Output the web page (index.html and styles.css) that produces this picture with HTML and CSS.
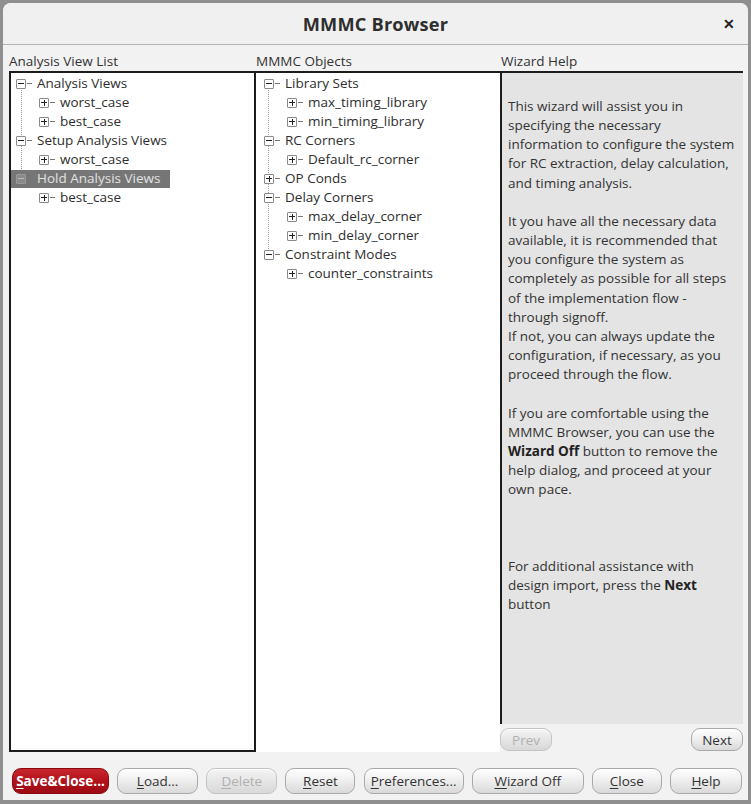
FILE: index.html
```html
<!DOCTYPE html>
<html>
<head>
<meta charset="utf-8">
<title>MMMC Browser</title>
<link rel="stylesheet" href="styles.css">
</head>
<body>
<div class="window">
  <div class="titlebar">
    <span></span>
    <span class="title">MMMC Browser</span>
    <span class="close">✕</span>
  </div>
  <div class="panes">
    <div class="label">Analysis View List</div>
    <div class="label">MMMC Objects</div>
    <div class="label">Wizard Help</div>

    <div class="pane left">
      <div class="tree tree-left">
        <div class="row l0"><span class="ex minus"></span><span class="dash"></span><span class="txt">Analysis Views</span></div>
        <div class="row l1"><span class="ex plus"></span><span class="dash"></span><span class="txt">worst_case</span></div>
        <div class="row l1"><span class="ex plus"></span><span class="dash"></span><span class="txt">best_case</span></div>
        <div class="row l0"><span class="ex minus"></span><span class="dash"></span><span class="txt">Setup Analysis Views</span></div>
        <div class="row l1"><span class="ex plus"></span><span class="dash"></span><span class="txt">worst_case</span></div>
        <div class="row l0"><span class="sel"><span class="ex minus"></span><span class="dash"></span><span class="txt">Hold Analysis Views</span></span></div>
        <div class="row l1"><span class="ex plus"></span><span class="dash"></span><span class="txt">best_case</span></div>
      </div>
    </div>

    <div class="pane mid">
      <div class="tree tree-mid">
        <div class="row l0"><span class="ex minus"></span><span class="dash"></span><span class="txt">Library Sets</span></div>
        <div class="row l1"><span class="ex plus"></span><span class="dash"></span><span class="txt">max_timing_library</span></div>
        <div class="row l1"><span class="ex plus"></span><span class="dash"></span><span class="txt">min_timing_library</span></div>
        <div class="row l0"><span class="ex minus"></span><span class="dash"></span><span class="txt">RC Corners</span></div>
        <div class="row l1"><span class="ex plus"></span><span class="dash"></span><span class="txt">Default_rc_corner</span></div>
        <div class="row l0"><span class="ex plus"></span><span class="dash"></span><span class="txt">OP Conds</span></div>
        <div class="row l0"><span class="ex minus"></span><span class="dash"></span><span class="txt">Delay Corners</span></div>
        <div class="row l1"><span class="ex plus"></span><span class="dash"></span><span class="txt">max_delay_corner</span></div>
        <div class="row l1"><span class="ex plus"></span><span class="dash"></span><span class="txt">min_delay_corner</span></div>
        <div class="row l0"><span class="ex minus"></span><span class="dash"></span><span class="txt">Constraint Modes</span></div>
        <div class="row l1"><span class="ex plus"></span><span class="dash"></span><span class="txt">counter_constraints</span></div>
      </div>
    </div>

    <div class="help-col">
      <div class="help">
        <p>This wizard will assist you in<br>specifying the necessary<br>information to configure the system<br>for RC extraction, delay calculation,<br>and timing analysis.<br><br>It you have all the necessary data<br>available, it is recommended that<br>you configure the system as<br>completely as possible for all steps<br>of the implementation flow -<br>through signoff.<br>If not, you can always update the<br>configuration, if necessary, as you<br>proceed through the flow.<br><br>If you are comfortable using the<br>MMMC Browser, you can use the<br><b>Wizard Off</b> button to remove the<br>help dialog, and proceed at your<br>own pace.<br><br><br><br>For additional assistance with<br>design import, press the <b>Next</b><br>button</p>
      </div>
      <div class="nav">
        <button class="btn small disabled">Prev</button>
        <button class="btn small">Next</button>
      </div>
    </div>
  </div>

  <div class="buttons">
    <button class="btn primary w-save"><u>S</u>ave&amp;Close...</button>
    <button class="btn w-load"><u>L</u>oad...</button>
    <button class="btn disabled w-delete"><u>D</u>elete</button>
    <button class="btn w-reset"><u>R</u>eset</button>
    <button class="btn w-pref"><u>P</u>references...</button>
    <button class="btn w-wiz"><u>W</u>izard Off</button>
    <button class="btn w-close"><u>C</u>lose</button>
    <button class="btn w-help"><u>H</u>elp</button>
  </div>
</div>
</body>
</html>
```
FILE: styles.css
```css
html, body {
  margin: 0;
  padding: 0;
}
body {
  background: #8f8f8f;
  width: 751px;
  height: 804px;
  overflow: hidden;
  font-family: "Open Sans", "Noto Sans", sans-serif;
  color: #333;
}
.window {
  margin: 3px 0 0 3px;
  width: 745px;
  height: 797px;
  background: #f2f2f2;
  border-radius: 8px 8px 0 0;
  display: flex;
  flex-direction: column;
}
.titlebar {
  height: 41px;
  border-bottom: 1px solid #b4b4b4;
  display: grid;
  grid-template-columns: 1fr auto 1fr;
  align-items: center;
  background: #f0f0f0;
  border-radius: 8px 8px 0 0;
}
.title {
  font-size: 18.2px;
  font-weight: 700;
  color: #2e2e2e;
  letter-spacing: 0.2px;
}
.close {
  justify-self: end;
  margin-right: 13px;
  font-size: 14px;
  font-weight: 700;
  color: #222;
}
.panes {
  margin-top: 7px;
  margin-left: 6px;
  display: grid;
  grid-template-columns: 247px 244px 243px;
  grid-template-rows: 19px 681px;
}
.label {
  font-size: 13.5px;
  line-height: 18px;
  color: #333;
}
.label:nth-child(3) { padding-left: 1px; }
.pane {
  background: #fff;
  box-sizing: border-box;
}
.pane.left {
  border: 2px solid #1c1c1c;
}
.pane.mid {
  border-top: 2px solid #1c1c1c;
}
.tree {
  font-size: 13.5px;
  line-height: 19px;
  padding-top: 1px;
  background-repeat: no-repeat;
  background-image: repeating-linear-gradient(to bottom, #9a9a9a 0 1px, transparent 1px 2px);
}
.tree-left {
  background-position: 10px 15px;
  background-size: 1px 96px;
}
.tree-mid {
  padding-left: 3px;
  background-position: 12px 15px;
  background-size: 1px 172px;
}
.row {
  display: flex;
  align-items: center;
  height: 19px;
  white-space: nowrap;
}
.row.l0 { padding-left: 5px; }
.row.l1 { padding-left: 28px; }
.sel {
  display: flex;
  align-items: center;
  height: 18px;
  margin-left: -5px;
  padding-left: 5px;
  padding-right: 10px;
  background: #767676;
  color: #e0e0e0;
}
.ex {
  width: 10px;
  height: 10px;
  box-sizing: border-box;
  border: 1px solid #8a8a8a;
  border-radius: 1px;
  background: #fff;
  flex: none;
  position: relative;
}
.sel .ex {
  background: #8a8a8a;
  border-color: #9a9a9a;
}
.ex::before,
.ex.plus::after {
  content: "";
  position: absolute;
  background: #222;
}
.ex::before {
  left: 1px;
  top: 3px;
  width: 6px;
  height: 2px;
}
.ex.plus::before { height: 1px; top: 3.5px; }
.ex.plus::after {
  left: 3.5px;
  top: 1px;
  width: 1px;
  height: 6px;
}
.ex.minus::before { height: 1px; top: 3.5px; }
.sel .ex::before { background: #bdbdbd; }
.dash {
  width: 5px;
  height: 1px;
  margin: 0 5px 0 1px;
  background: #777;
  flex: none;
}
.txt { color: #2e2e2e; }
.sel .txt { color: #e2e2e2; }

.help-col {
  display: flex;
  flex-direction: column;
}
.help {
  flex: 1;
  background: #e4e4e4;
  border-top: 2px solid #1c1c1c;
  border-left: 2px solid #1c1c1c;
  padding: 0 0 0 6px;
}
.help p {
  margin: 24px 0 0 0;
  font-size: 13.5px;
  line-height: 19.15px;
  color: #333;
}
.help b { color: #222; }
.nav {
  display: flex;
  justify-content: space-between;
  margin-top: 4px;
  height: 23px;
  margin-bottom: 1px;
}
.btn {
  font-family: "Open Sans", "Noto Sans", sans-serif;
  font-size: 13.5px;
  color: #333;
  height: 26px;
  padding: 0;
  border: 1px solid #a9a9a9;
  border-radius: 9px;
  background: linear-gradient(to bottom, #fefefe 0%, #f0f0f0 45%, #d9d9d9 100%);
  box-shadow: inset 0 1px 0 #fff;
}
.btn u { text-decoration-thickness: 1px; text-underline-offset: 2px; }
.btn.small {
  width: 52px;
  height: 23px;
}
.btn.disabled {
  color: #b0b0b0;
  border-color: #c4c4c4;
  background: linear-gradient(to bottom, #f4f4f4 0%, #e6e6e6 50%, #d8d8d8 100%);
}
.btn.primary {
  background: linear-gradient(to bottom, #c8262e 0%, #b0101a 55%, #9c0c14 100%);
  border-color: #8a0a10;
  color: #fff;
  font-weight: 700;
  box-shadow: none;
}
.buttons {
  margin-top: 16px;
  margin-left: 9px;
  margin-right: 6px;
  display: flex;
  justify-content: space-between;
}
.w-save { width: 97px; }
.w-load { width: 81px; }
.w-delete { width: 71px; }
.w-reset { width: 70px; }
.w-pref { width: 100px; }
.w-wiz { width: 112px; }
.w-close { width: 70px; }
.w-help { width: 72px; }
```
